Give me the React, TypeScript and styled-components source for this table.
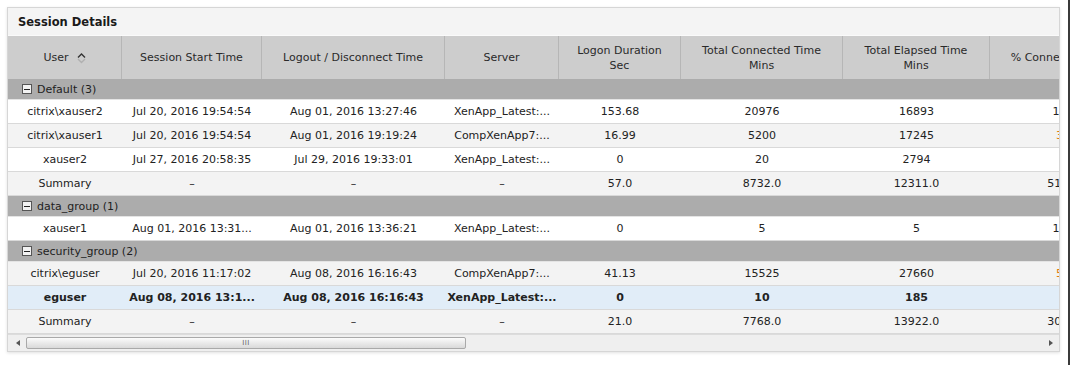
import React from 'react';
import styled, { createGlobalStyle } from 'styled-components';

const GlobalStyle = createGlobalStyle`
  html, body {
    margin: 0;
    padding: 0;
    background: #fff;
  }
  body {
    font-family: "DejaVu Sans", Verdana, sans-serif;
    font-size: 11px;
    color: #222;
  }
`;

interface IColumn {
  title: string;
  sub?: string;
  width: number;
  sortable?: boolean;
}

type Cell = string | { text: string; warn?: boolean };

interface IDataRow {
  kind: 'data' | 'summary';
  cells: Cell[];
  selected?: boolean;
  shaded?: boolean;
}

interface IGroup {
  name: string;
  rows: IDataRow[];
}

const columns: IColumn[] = [
  { title: 'User', width: 114, sortable: true },
  { title: 'Session Start Time', width: 140 },
  { title: 'Logout / Disconnect Time', width: 183 },
  { title: 'Server', width: 114 },
  { title: 'Logon Duration', sub: 'Sec', width: 122 },
  { title: 'Total Connected Time', sub: 'Mins', width: 162 },
  { title: 'Total Elapsed Time', sub: 'Mins', width: 147 },
  { title: '% Connected Time', width: 146 },
];

const gridTemplate = columns.map((c) => `${c.width}px`).join(' ');

const groups: IGroup[] = [
  {
    name: 'Default (3)',
    rows: [
      { kind: 'data', cells: ['citrix\\xauser2', 'Jul 20, 2016 19:54:54', 'Aug 01, 2016 13:27:46', 'XenApp_Latest:...', '153.68', '20976', '16893', '100'] },
      { kind: 'data', shaded: true, cells: ['citrix\\xauser1', 'Jul 20, 2016 19:54:54', 'Aug 01, 2016 19:19:24', 'CompXenApp7:...', '16.99', '5200', '17245', { text: '30', warn: true }] },
      { kind: 'data', cells: ['xauser2', 'Jul 27, 2016 20:58:35', 'Jul 29, 2016 19:33:01', 'XenApp_Latest:...', '0', '20', '2794', '1'] },
      { kind: 'summary', shaded: true, cells: ['Summary', '–', '–', '–', '57.0', '8732.0', '12311.0', '51.67'] },
    ],
  },
  {
    name: 'data_group (1)',
    rows: [
      { kind: 'data', cells: ['xauser1', 'Aug 01, 2016 13:31...', 'Aug 01, 2016 13:36:21', 'XenApp_Latest:...', '0', '5', '5', '100'] },
    ],
  },
  {
    name: 'security_group (2)',
    rows: [
      { kind: 'data', shaded: true, cells: ['citrix\\eguser', 'Jul 20, 2016 11:17:02', 'Aug 08, 2016 16:16:43', 'CompXenApp7:...', '41.13', '15525', '27660', { text: '56', warn: true }] },
      { kind: 'data', selected: true, cells: ['eguser', 'Aug 08, 2016 13:1...', 'Aug 08, 2016 16:16:43', 'XenApp_Latest:...', '0', '10', '185', '5'] },
      { kind: 'summary', shaded: true, cells: ['Summary', '–', '–', '–', '21.0', '7768.0', '13922.0', '30.50'] },
    ],
  },
];

const Page = styled.div`
  box-sizing: border-box;
  width: 1070px;
  height: 365px;
  padding: 7px 0 0 7px;
  border-right: 2px solid #3a3a3a;
`;

const Panel = styled.section`
  width: 1051px;
  border: 1px solid #d6d6d6;
  background: #f4f4f4;
  box-shadow: 0 1px 3px rgba(0, 0, 0, 0.12);
`;

const TitleBar = styled.header`
  height: 27px;
  display: flex;
  align-items: center;
  padding-left: 10px;
  font-weight: bold;
  font-size: 11.5px;
  color: #1a1a1a;
  border-bottom: 1px solid #fafafa;
`;

const Viewport = styled.div`
  overflow: hidden;
  background: #fff;
`;

const Grid = styled.div`
  width: ${columns.reduce((s, c) => s + c.width, 0)}px;
`;

const HeaderRow = styled.div`
  display: grid;
  grid-template-columns: ${gridTemplate};
  height: 43px;
  background: #cdcdcd;
`;

const HeaderCell = styled.div`
  display: flex;
  flex-direction: column;
  align-items: center;
  justify-content: center;
  border-right: 1px solid #b6b6b6;
  color: #2a2a2a;
  line-height: 15px;
  white-space: nowrap;
  overflow: hidden;
`;

const HeaderLine = styled.span`
  display: flex;
  align-items: center;
  gap: 8px;
`;

const GroupRow = styled.div`
  height: 20px;
  display: flex;
  align-items: center;
  gap: 5px;
  padding-left: 14px;
  background: #acacac;
  border-bottom: 1px solid #e4e4e4;
  color: #1e1e1e;
`;

const Toggle = styled.span`
  box-sizing: border-box;
  width: 10px;
  height: 10px;
  border: 1px solid #555;
  background: #f2f2f2;
  display: flex;
  align-items: center;
  justify-content: center;

  &::after {
    content: '';
    width: 6px;
    height: 1px;
    background: #222;
  }
`;

const DataRow = styled.div<{ $shaded?: boolean; $selected?: boolean }>`
  display: grid;
  grid-template-columns: ${gridTemplate};
  height: 23px;
  align-items: center;
  border-bottom: 1px solid #d9d9d9;
  background: ${({ $shaded, $selected }) => {
    if ($selected) return '#e1edf8';
    return $shaded ? '#f3f3f3' : '#ffffff';
  }};
  font-weight: ${({ $selected }) => ($selected ? 'bold' : 'normal')};
`;

const DataCell = styled.div<{ $warn?: boolean }>`
  text-align: center;
  white-space: nowrap;
  overflow: hidden;
  padding: 0 2px;
  color: ${({ $warn }) => ($warn ? '#e07d10' : '#222')};
`;

const ScrollBar = styled.div`
  height: 16px;
  display: flex;
  align-items: center;
  gap: 6px;
  padding: 0 6px 0 8px;
  background: #efefef;
  border-top: 1px solid #dcdcdc;
`;

const Arrow = styled.span<{ $dir: 'left' | 'right' }>`
  width: 0;
  height: 0;
  border-top: 3px solid transparent;
  border-bottom: 3px solid transparent;
  ${({ $dir }) => ($dir === 'left' ? 'border-right: 4px solid #555;' : 'border-left: 4px solid #555;')}
`;

const Track = styled.div`
  flex: 1;
  display: flex;
  align-items: center;
`;

const Thumb = styled.div`
  box-sizing: border-box;
  height: 12px;
  border: 1px solid #a9a9a9;
  border-radius: 2px;
  background: linear-gradient(#fbfbfb, #d9d9d9);
  display: flex;
  align-items: center;
  justify-content: center;
  color: #666;
  font-size: 7px;
  letter-spacing: 0.5px;
`;

const SortIcon: React.FC = () => (
  <svg width="9" height="12" viewBox="0 0 9 12">
    <path d="M1 5.5 L4.5 2 L8 5.5" fill="none" stroke="#333" strokeWidth="1.4" />
    <path d="M1 7 L4.5 10.5 L8 7" fill="none" stroke="#b0b0b0" strokeWidth="1.4" />
  </svg>
);

const cellText = (c: Cell) => (typeof c === 'string' ? c : c.text);
const cellWarn = (c: Cell) => (typeof c === 'string' ? false : !!c.warn);

const App: React.FC = () => (
  <Page>
    <GlobalStyle />
    <Panel>
      <TitleBar>Session Details</TitleBar>
      <Viewport>
        <Grid>
          <HeaderRow>
            {columns.map((col) => (
              <HeaderCell key={col.title}>
                <HeaderLine>
                  {col.title}
                  {col.sortable && <SortIcon />}
                </HeaderLine>
                {col.sub && <span>{col.sub}</span>}
              </HeaderCell>
            ))}
          </HeaderRow>
          {groups.map((group) => (
            <React.Fragment key={group.name}>
              <GroupRow>
                <Toggle />
                {group.name}
              </GroupRow>
              {group.rows.map((row, i) => (
                <DataRow key={`${group.name}-${i}`} $shaded={row.shaded} $selected={row.selected}>
                  {row.cells.map((c, j) => (
                    // eslint-disable-next-line react/no-array-index-key
                    <DataCell key={j} $warn={cellWarn(c)}>{cellText(c)}</DataCell>
                  ))}
                </DataRow>
              ))}
            </React.Fragment>
          ))}
        </Grid>
      </Viewport>
      <ScrollBar>
        <Arrow $dir="left" />
        <Track>
          <Thumb style={{ width: 440 }}>III</Thumb>
        </Track>
        <Arrow $dir="right" />
      </ScrollBar>
    </Panel>
  </Page>
);

export default App;
